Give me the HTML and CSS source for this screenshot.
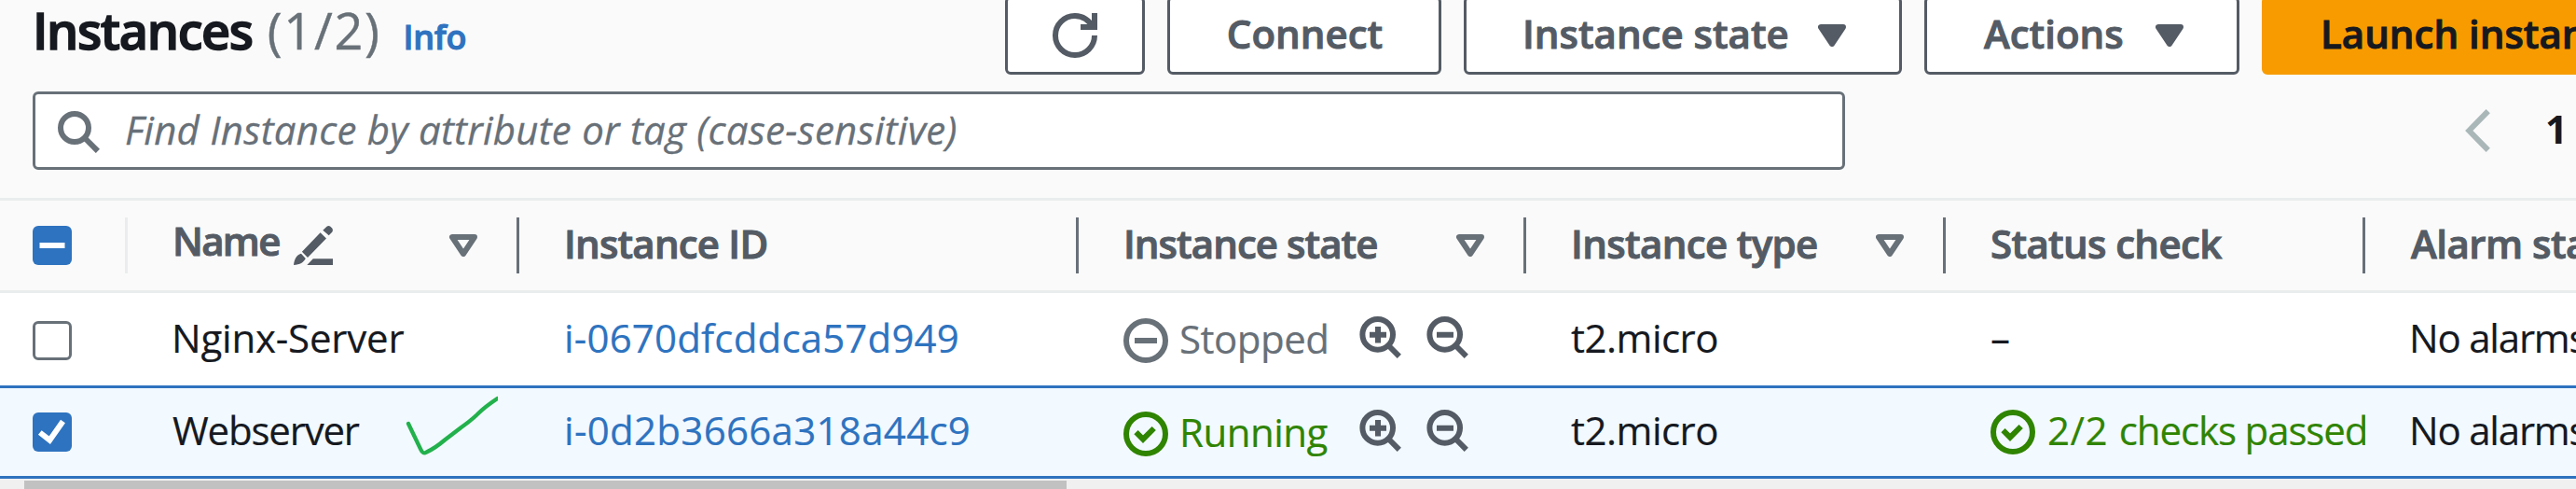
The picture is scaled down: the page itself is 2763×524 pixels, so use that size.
FILE: index.html
```
<!DOCTYPE html>
<html lang="en">
<head>
<meta charset="utf-8">
<title>Instances</title>
<link rel="stylesheet" href="styles.css">
</head>
<body>
<svg class="defs" width="0" height="0" aria-hidden="true">
  <symbol id="zoom-in" viewBox="0 0 48 48">
    <circle cx="21.7" cy="21.4" r="16.3"/><path d="M33 33l11.8 11.8M13 21.7h18M22 13v17.5"/>
  </symbol>
  <symbol id="zoom-out" viewBox="0 0 48 48">
    <circle cx="21.7" cy="21.4" r="16.3"/><path d="M33 33l11.8 11.8M13 21.7h18"/>
  </symbol>
  <symbol id="ok" viewBox="0 0 16 16">
    <circle cx="8" cy="8" r="7"/><path d="M4.5 7.4 7 9.9l3.9-3.9"/>
  </symbol>
  <symbol id="stopped" viewBox="0 0 16 16">
    <circle cx="8" cy="8" r="7"/><path d="M4 8h8"/>
  </symbol>
  <symbol id="caret" viewBox="0 0 30 24">
    <path d="M3 3h24L15 21z"/>
  </symbol>
</svg>

<header class="toolbar">
  <div class="heading">
    <h1 class="title">Instances</h1>
    <span class="counter">(1/2)</span>
    <a class="info">Info</a>
  </div>
  <div class="actions">
    <button class="btn btn-refresh"><svg class="icon" viewBox="0 0 16 16"><path d="M10 5h5V0"/><path d="M15 8a6.957 6.957 0 0 1-7 7 6.957 6.957 0 0 1-7-7 6.957 6.957 0 0 1 7-7 6.87 6.87 0 0 1 6.3 4"/></svg></button>
    <button class="btn btn-connect"><span>Connect</span></button>
    <button class="btn btn-state"><span>Instance state</span><svg class="caret caret-filled"><use href="#caret"/></svg></button>
    <button class="btn btn-actions"><span>Actions</span><svg class="caret caret-filled"><use href="#caret"/></svg></button>
    <button class="btn btn-launch"><span>Launch instances</span></button>
  </div>
</header>

<div class="filters">
  <div class="search">
    <svg class="icon" viewBox="0 0 16 16"><circle cx="7" cy="7" r="5"/><path d="M11 11l4.300 4.300"/></svg>
    <span class="placeholder">Find Instance by attribute or tag (case-sensitive)</span>
  </div>
  <div class="pages">
    <svg class="chevron" viewBox="0 0 27 46"><path d="M24.7 2.2 4.3 23l20.4 20.8"/></svg>
    <span class="page">1</span>
  </div>
</div>

<div class="table">
  <div class="row head">
    <div class="cell select"><span class="check on"><svg viewBox="0 0 42 42"><path d="M7.5 21h27"/></svg></span></div>
    <div class="cell"><span class="label name">Name</span>
      <svg class="edit" viewBox="0 0 42 42"><path d="M0 42C.8 36 2.600 31.500 8 29.700L12.800 35C10.500 39.300 7 41.500 0 42zM8.900 27.700 28.600 7.300 35 13.500 15 34zM31.300 4.700 35.500.8q2-1.600 3.900 0l1.800 1.800q1.400 2 0 4.100l-3.500 3.500zM14.300 42l6.500-6.700H42V42z"/></svg>
      <svg class="caret caret-open"><use href="#caret"/></svg></div>
    <div class="cell"><span class="label id">Instance ID</span></div>
    <div class="cell"><span class="label state">Instance state</span><svg class="caret caret-open"><use href="#caret"/></svg></div>
    <div class="cell"><span class="label type">Instance type</span><svg class="caret caret-open"><use href="#caret"/></svg></div>
    <div class="cell"><span class="label status">Status check</span></div>
    <div class="cell last"><span class="label alarm">Alarm status</span></div>
  </div>

  <div class="row">
    <div class="cell select"><span class="check"></span></div>
    <div class="cell"><span class="text nginx">Nginx-Server</span></div>
    <div class="cell"><a class="text link">i-0670dfcddca57d949</a></div>
    <div class="cell"><span class="badge muted"><svg class="icon"><use href="#stopped"/></svg><span>Stopped</span></span>
      <svg class="zoom"><use href="#zoom-in"/></svg><svg class="zoom"><use href="#zoom-out"/></svg></div>
    <div class="cell"><span class="text micro">t2.micro</span></div>
    <div class="cell"><span class="text">–</span></div>
    <div class="cell last"><span class="text alarms">No alarms</span></div>
  </div>

  <div class="row selected">
    <div class="cell select"><span class="check on"><svg viewBox="0 0 42 42"><path d="M7.800 21.500 18.300 29.700 32.500 9.500"/></svg></span></div>
    <div class="cell"><span class="text web">Webserver</span>
      <svg class="mark" viewBox="0 0 100 66"><path d="M4 30l13.500 28q2 5 6 2.500Q33 56 43 47.500l17-13Q72 26 79 19T99.500 3"/></svg></div>
    <div class="cell"><a class="text link wide">i-0d2b3666a318a44c9</a></div>
    <div class="cell"><span class="badge good"><svg class="icon"><use href="#ok"/></svg><span>Running</span></span>
      <svg class="zoom"><use href="#zoom-in"/></svg><svg class="zoom"><use href="#zoom-out"/></svg></div>
    <div class="cell"><span class="text micro">t2.micro</span></div>
    <div class="cell"><span class="badge good checks"><svg class="icon"><use href="#ok"/></svg><span><span class="ratio">2/2 </span>checks passed</span></span></div>
    <div class="cell last"><span class="text alarms">No alarms</span></div>
  </div>
</div>

<div class="scrollbar"><div class="thumb"></div></div>
</body>
</html>
```
FILE: styles.css
```
* { box-sizing: border-box; }

body {
  margin: 0;
  height: 524px;
  overflow: hidden;
  display: flex;
  flex-direction: column;
  background: #fafafa;
  color: #16191f;
  font: 42px/60px "Open Sans", "Noto Sans", sans-serif;
  white-space: nowrap;
}

svg {
  display: block;
  flex: none;
  fill: none;
  stroke: currentColor;
}

.defs { position: absolute; }

.icon { width: 48px; height: 48px; stroke-width: 2; }

/* toolbar */
.toolbar {
  display: flex;
  flex: none;
  height: 84px;
  margin-top: -4px;
  padding-left: 35px;
}

.heading {
  display: flex;
  flex: none;
  align-items: baseline;
  width: 1043px;
  line-height: 72px;
}

.title {
  margin: 0;
  font-size: 54px;
  font-weight: 600;
  letter-spacing: -1.4px;
  -webkit-text-stroke: 1.5px currentColor;
}

.counter {
  margin-left: 16px;
  color: #687078;
  font-size: 54px;
  letter-spacing: 1.7px;
  -webkit-text-stroke: .4px currentColor;
}

.info {
  margin-left: 24px;
  color: #2e73bf;
  font-size: 36px;
  font-weight: 600;
  letter-spacing: -.3px;
  -webkit-text-stroke: 1px currentColor;
}

.actions { display: flex; flex: none; gap: 24px; }

.btn {
  display: flex;
  align-items: center;
  justify-content: space-between;
  height: 84px;
  margin: 0;
  padding: 0 57px 0 60px;
  border: 3px solid #545b64;
  border-radius: 6px;
  background: #fff;
  color: #545b64;
  font: inherit;
  font-weight: 600;
  -webkit-text-stroke: 1px currentColor;
}

.btn span { padding-bottom: 4px; }
.btn-refresh { width: 150px; justify-content: center; padding: 0; }
.btn-connect { width: 294px; justify-content: center; padding: 0 0 0 1px; }
.btn-state { width: 470px; }
.btn-actions { width: 338px; padding-left: 61px; }

.btn-launch {
  width: 470px;
  border-color: #f79b00;
  background: #f79b00;
  color: #16191f;
}

.caret { width: 30px; height: 24px; stroke-width: 6; stroke-linejoin: round; }
.caret-filled { fill: currentColor; }
.caret-open { margin-left: auto; color: #687078; }

/* filter row */
.filters {
  display: flex;
  flex: none;
  justify-content: space-between;
  height: 132px;
  padding: 18px 16px 30px 35px;
}

.search {
  display: flex;
  align-items: center;
  width: 1944px;
  padding-left: 21px;
  border: 3px solid #687078;
  border-radius: 6px;
  background: #fff;
  color: #687078;
}

.placeholder {
  padding: 0 0 3px 27px;
  font-style: italic;
  letter-spacing: .24px;
  -webkit-text-stroke: .3px currentColor;
}

.pages { display: flex; align-items: center; }
.chevron { width: 27px; height: 46px; color: #aab7b8; stroke-width: 6; }

.page {
  width: 17px;
  margin-left: 59px;
  padding-bottom: 4px;
  font-weight: 700;
}

/* table */
.row {
  display: grid;
  grid-template-columns: 137px 420px 600px 480px 450px 450px 226px;
  height: 99px;
  background: #fff;
}

.head {
  height: 102px;
  border: solid #eaeded;
  border-width: 3px 0;
  background: #fafafa;
  color: #545b64;
}

.selected {
  height: 100px;
  border: solid #2e73bf;
  border-width: 3px 0;
  background: #f2f9ff;
}

.cell {
  display: flex;
  align-items: center;
  min-width: 0;
  padding-left: 48px;
  overflow: hidden;
}

.head .cell {
  height: 60px;
  margin-top: 18px;
  padding-right: 42px;
  border-right: 3px solid #687078;
}

.head .select { padding-right: 0; border-color: #eaeded; }
.head .last { border: 0; padding-right: 0; }
.cell.select { padding-left: 35px; }

.check {
  width: 42px;
  height: 42px;
  margin-top: 3px;
  border: 3px solid #687078;
  border-radius: 6px;
  background: #fff;
}

.check.on { margin-top: 0; border: 0; background: #2e73bf; }
.check svg { color: #fff; stroke-width: 6; }

.label {
  padding-bottom: 4px;
  font-weight: 600;
  -webkit-text-stroke: 1px currentColor;
}

.label.name { padding-bottom: 10px; letter-spacing: -1.7px; }
.label.id { letter-spacing: -.8px; }
.label.state { letter-spacing: -.95px; }
.label.type { letter-spacing: -.65px; }
.label.status { letter-spacing: -.65px; }
.label.alarm { margin-left: 1px; letter-spacing: -.5px; }

.edit { width: 42px; height: 42px; margin-left: 15px; fill: currentColor; stroke: none; }

.text { padding-bottom: 3px; -webkit-text-stroke: .2px currentColor; }
.selected .text { padding-bottom: 4px; }
.nginx { margin-left: -1px; letter-spacing: -.2px; }
.web { letter-spacing: -1.2px; }
.link { color: #2e73bf; letter-spacing: .17px; }
.link.wide { letter-spacing: .3px; }
.micro { letter-spacing: -.5px; }
.alarms { margin-left: -1px; letter-spacing: -1.2px; }

.mark { width: 100px; height: 66px; margin: -13px 0 0 49px; color: #22b14c; stroke-width: 4.3; stroke-linecap: round; }

.badge {
  display: flex;
  align-items: center;
  gap: 12px;
  width: 225px;
  flex: none;
  letter-spacing: -.5px;
  -webkit-text-stroke: .2px currentColor;
}

.badge > span { padding-bottom: 1px; }
.badge .icon { margin-top: 3px; }
.muted { color: #687078; }
.good { color: #2f8400; }
.badge.checks { width: auto; gap: 13px; letter-spacing: -1.1px; }
.badge.checks .icon { margin-top: 0; }
.badge.checks > span { padding-bottom: 5px; }
.ratio { letter-spacing: .6px; }

.zoom { width: 48px; height: 48px; margin: -5px 24px 0 0; color: #545b64; stroke-width: 6; }
.badge + .zoom { margin-left: 26px; }

/* horizontal scrollbar */
.scrollbar {
  flex: 1;
  padding: 2px 0 0 26px;
  background: #f0f0f0;
}

.thumb { width: 1118px; height: 9px; background: #c1c1c1; }
```
